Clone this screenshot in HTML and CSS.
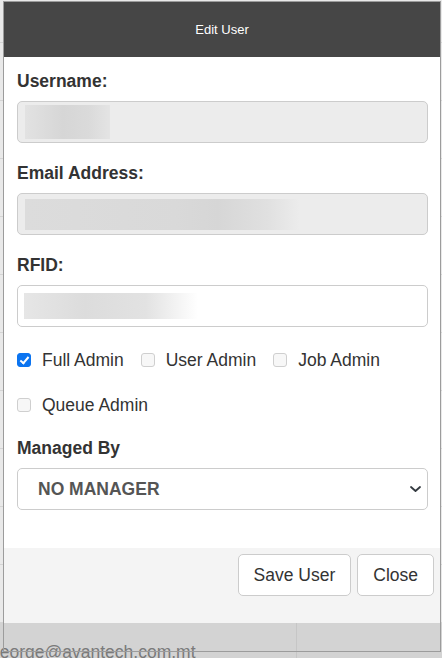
FILE: index.html
```html
<!DOCTYPE html>
<html lang="en">
<head>
    <meta charset="UTF-8">
    <meta name="viewport" content="width=device-width, initial-scale=1.0">
    <title>Edit User</title>
    <link rel="stylesheet" href="styles.css">
</head>
<body>
    <!-- users table behind the dialog -->
    <div class="page">
        <div class="page-head"></div>
        <div class="page-row"></div>
        <div class="page-row"></div>
        <div class="page-row"></div>
        <div class="page-row"></div>
        <div class="page-row"></div>
        <div class="page-row"></div>
        <div class="page-row"></div>
        <div class="page-row"></div>
        <div class="page-row"></div>
        <div class="page-row"></div>
        <div class="page-foot">
            <div class="page-cell page-cell-email"><span>george@avantech.com.mt</span></div>
            <div class="page-cell"></div>
        </div>
    </div>

    <div class="modal">
        <div class="modal-content">
            <div class="modal-header">Edit User</div>

            <div class="modal-body">
                <div class="form-group">
                    <label>Username:</label>
                    <div class="field readonly"><span class="redact redact-user"></span></div>
                </div>

                <div class="form-group">
                    <label>Email Address:</label>
                    <div class="field readonly"><span class="redact redact-email"></span></div>
                </div>

                <div class="form-group">
                    <label>RFID:</label>
                    <div class="field"><span class="redact redact-rfid"></span></div>
                </div>

                <div class="checks">
                    <label class="check"><input type="checkbox" checked> Full Admin</label>
                    <label class="check"><input type="checkbox"> User Admin</label>
                    <label class="check"><input type="checkbox"> Job Admin</label>
                    <label class="check"><input type="checkbox"> Queue Admin</label>
                </div>

                <div class="form-group">
                    <label for="manager">Managed By</label>
                    <div class="select-wrap">
                        <select id="manager">
                            <option>NO MANAGER</option>
                        </select>
                        <svg class="chevron" width="11" height="6" viewBox="0 0 11 6">
                            <polyline points="1,1 5.5,5 10,1" fill="none" stroke="#343a40" stroke-width="1.8" stroke-linecap="round" stroke-linejoin="round"/>
                        </svg>
                    </div>
                </div>
            </div>

            <div class="modal-footer">
                <button>Save User</button>
                <button>Close</button>
            </div>
        </div>
    </div>
</body>
</html>
```

FILE: styles.css
```css
body {
    margin: 0;
    font-family: "Liberation Sans", Arial, sans-serif;
    color: #333;
    background-color: #e9e9e9;
    overflow: hidden;
}

/* background page */
.page-head {
    height: 42px;
    border-bottom: 1px solid #d4d4d4;
}
.page-row {
    height: 57px;
    border-bottom: 1px solid #d4d4d4;
}
.page-foot {
    display: flex;
    height: 60px;
    background-color: #d3d3d3;
}
.page-cell {
    flex: 1;
}
.page-cell-email {
    flex: 0 0 296px;
    border-right: 1px solid #c6c6c6;
    padding-top: 19px;
    font-size: 17.5px;
    line-height: 20px;
    color: #7a7a7a;
    white-space: nowrap;
    overflow: hidden;
}
.page-cell-email span {
    margin-left: -10px;
}

/* dialog */
.modal {
    position: absolute;
    top: 1px;
    left: 3px;
    width: 438px;
    height: 651px;
    box-sizing: border-box;
    border: 1px solid #9c9c9c;
}
.modal-content {
    background-color: #fff;
}
.modal-header {
    height: 55px;
    line-height: 55px;
    background-color: #464646;
    color: #fff;
    font-size: 13px;
    text-align: center;
}
.modal-body {
    padding: 14px 12px 18px 13px;
}
.form-group {
    margin-bottom: 20px;
}
.form-group > label {
    display: block;
    font-size: 17.5px;
    line-height: 20px;
    font-weight: bold;
    margin-bottom: 10px;
}
.field {
    display: flex;
    align-items: center;
    height: 42px;
    box-sizing: border-box;
    padding: 0 7px;
    border: 1px solid #cccccc;
    border-radius: 5px;
    background-color: #fff;
}
.field.readonly {
    background-color: #ececec;
}

/* blurred values */
.redact {
    display: block;
}
.redact-user {
    width: 85px;
    height: 34px;
    background: linear-gradient(to right, #e2e2e2, #d6d6d6 45%, #dadada 75%, #e4e4e4);
}
.redact-email {
    width: 275px;
    height: 31px;
    background: linear-gradient(to right, #dcdcdc, #d9d9d9 55%, #d6d6d6 70%, #e0e0e0 88%, #ececec);
}
.redact-rfid {
    margin-left: -1px;
    width: 174px;
    height: 26px;
    background: linear-gradient(to right, #e6e6e6, #dcdcdc 35%, #e2e2e2 70%, #ffffff);
}

/* permission checkboxes */
.checks {
    display: flex;
    flex-wrap: wrap;
    column-gap: 17px;
    row-gap: 19px;
    margin-top: 3px;
    margin-bottom: 20px;
}
.check {
    display: flex;
    align-items: center;
    gap: 11px;
    font-size: 17.5px;
    line-height: 26px;
}
.check input {
    appearance: none;
    position: relative;
    width: 14px;
    height: 14px;
    margin: 0;
    border: 1px solid #cfcfcf;
    border-radius: 3px;
    background-color: #f7f7f7;
}
.check input:checked {
    border-color: #0b74f0;
    background-color: #0b74f0;
}
.check input:checked::after {
    content: "";
    position: absolute;
    left: 3.5px;
    top: 0.5px;
    width: 3px;
    height: 7px;
    border: solid #fff;
    border-width: 0 2.2px 2.2px 0;
    transform: rotate(40deg);
}

/* manager select */
.select-wrap {
    position: relative;
}
select {
    appearance: none;
    width: 100%;
    height: 42px;
    padding: 0 20px;
    border: 1px solid #cccccc;
    border-radius: 5px;
    background-color: #fff;
    font-family: inherit;
    font-size: 17.5px;
    font-weight: bold;
    color: #555;
}
.chevron {
    position: absolute;
    right: 7px;
    top: 18px;
}

.modal-footer {
    display: flex;
    justify-content: flex-end;
    gap: 6px;
    height: 75px;
    box-sizing: border-box;
    padding: 6px 6px 0 0;
    background-color: #f4f4f4;
}
button {
    height: 42px;
    padding: 0 15px;
    border: 1px solid #cccccc;
    border-radius: 5px;
    background-color: #fff;
    font-family: inherit;
    font-size: 17.5px;
    color: #333;
}
```
